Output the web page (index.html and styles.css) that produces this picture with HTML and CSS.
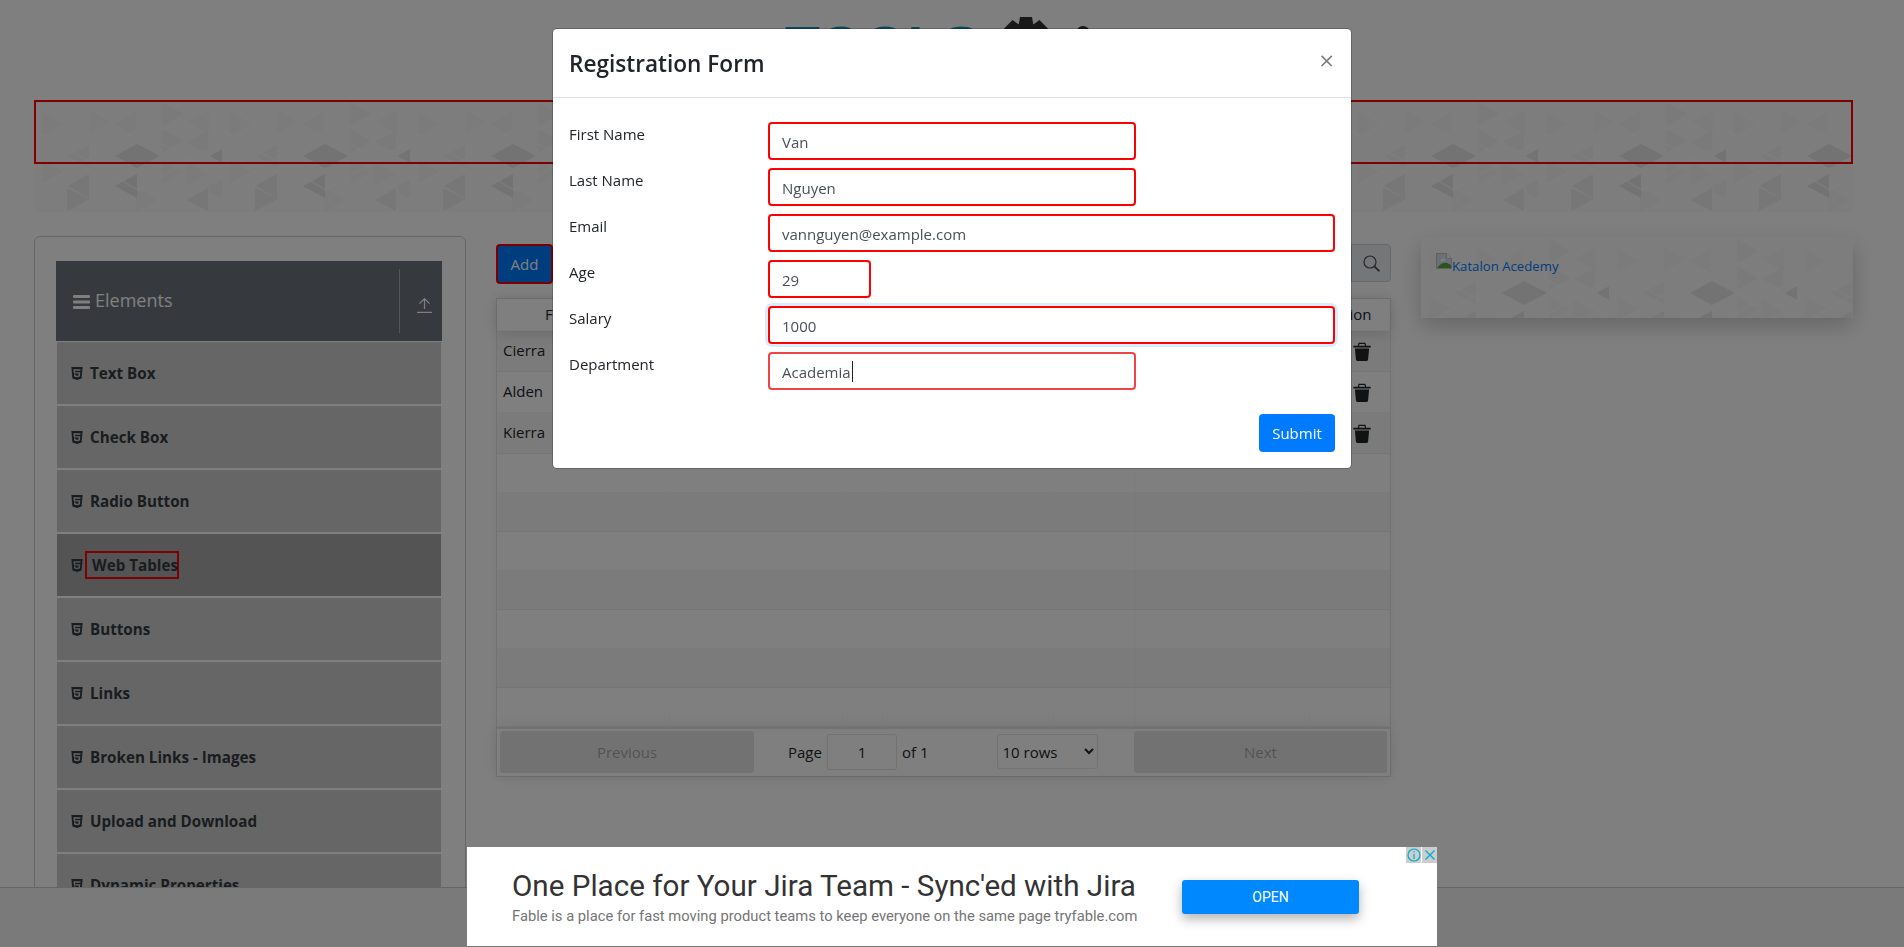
FILE: index.html
```html
<!DOCTYPE html>
<html>
<head>
    <title>ToolsQA - Web Tables</title>
    <link rel="stylesheet" href="styles.css">
</head>
<body>
    <svg class="svg-defs" width="0" height="0">
        <defs>
            <pattern id="triangles" width="188" height="112" patternUnits="userSpaceOnUse">
                <rect width="188" height="112" fill="#fafafa"/>
                <g fill="#f6f6f6">
                    <path d="M8 12l21 12-21 12zM55 10l21 12-21 12zM102 12l-21 12 21 12zM175 10l-21 12 21 12zM8 60l21 12-21 12zM128 60l21 12-21 12zM152 62l21 12-21 12zM102 88l21 12-21 12z"/>
                </g>
                <g fill="#f4f4f4">
                    <path d="M128 29l21 12-21 12zM153 42l21-11v22zM34 56l21-11v22zM128 2l21 12-21 12z"/>
                    <path d="M176 86l12-6v18l-12-6z"/>
                </g>
                <g fill="#eeeeee">
                    <path d="M33 88l23 11-23 12zM153 100l21-12v23zM34 86l21-12v24z"/>
                </g>
                <g fill="#e6e6e6">
                    <path d="M81 56l22-12v24zM103 44l23 12-23 12zM176 56l21-12v24z"/>
                    <path d="M81 86l22-12v24z"/>
                </g>
                <g stroke="#ffffff" stroke-width="2" fill="none" opacity="0.5">
                    <path d="M0 30l52 30 52-30 52 30 32-18M0 90l52-30 52 30 52-30 32 18"/>
                </g>
            </pattern>
        </defs>
    </svg>

    <div class="page">
        <header class="logo-row">
            <div class="logo">
                <span class="logo-text">TOOLS</span>
                <svg class="logo-gear" width="50" height="50" viewBox="0 0 50 50">
                    <circle cx="25" cy="25" r="19" fill="#333"/>
                    <g fill="#333">
                        <path d="M19 0h12l2 12H17z"/>
                        <path d="M19 0h12l2 12H17z" transform="rotate(45 25 25)"/>
                        <path d="M19 0h12l2 12H17z" transform="rotate(90 25 25)"/>
                        <path d="M19 0h12l2 12H17z" transform="rotate(135 25 25)"/>
                        <path d="M19 0h12l2 12H17z" transform="rotate(180 25 25)"/>
                        <path d="M19 0h12l2 12H17z" transform="rotate(225 25 25)"/>
                        <path d="M19 0h12l2 12H17z" transform="rotate(270 25 25)"/>
                        <path d="M19 0h12l2 12H17z" transform="rotate(315 25 25)"/>
                    </g>
                </svg>
                <span class="logo-head"></span>
            </div>
        </header>

        <div class="banner">
            <svg class="pattern-fill" width="100%" height="100%"><rect width="100%" height="100%" fill="url(#triangles)"/></svg>
            <div class="banner-mark"></div>
        </div>

        <div class="columns">
            <aside class="side-card">
                <div class="group-header">
                    <svg class="bars" width="17" height="14" viewBox="0 0 17 14"><path d="M1 0h15a1 1 0 0 1 1 1v1a1 1 0 0 1-1 1H1a1 1 0 0 1-1-1V1a1 1 0 0 1 1-1zM1 5.5h15a1 1 0 0 1 1 1v1a1 1 0 0 1-1 1H1a1 1 0 0 1-1-1v-1a1 1 0 0 1 1-1zM1 11h15a1 1 0 0 1 1 1v1a1 1 0 0 1-1 1H1a1 1 0 0 1-1-1v-1a1 1 0 0 1 1-1z" fill="#fff"/></svg>
                    <span class="group-title">Elements</span>
                    <div class="group-toggle">
                        <svg width="15" height="15" viewBox="0 0 15 15" fill="none" stroke="#fff" stroke-width="1.2"><path d="M7.5 11V.8M2.5 5.6l5-5 5 5M0 14.4h15"/></svg>
                    </div>
                </div>
                <ul class="menu">
                    <li class="menu-item"><svg class="html5" viewBox="0 0 384 512"><use href="#html5-shape"/></svg><span>Text Box</span></li>
                    <li class="menu-item"><svg class="html5" viewBox="0 0 384 512"><use href="#html5-shape"/></svg><span>Check Box</span></li>
                    <li class="menu-item"><svg class="html5" viewBox="0 0 384 512"><use href="#html5-shape"/></svg><span>Radio Button</span></li>
                    <li class="menu-item active"><svg class="html5" viewBox="0 0 384 512"><use href="#html5-shape"/></svg><span class="marked">Web Tables</span></li>
                    <li class="menu-item"><svg class="html5" viewBox="0 0 384 512"><use href="#html5-shape"/></svg><span>Buttons</span></li>
                    <li class="menu-item"><svg class="html5" viewBox="0 0 384 512"><use href="#html5-shape"/></svg><span>Links</span></li>
                    <li class="menu-item"><svg class="html5" viewBox="0 0 384 512"><use href="#html5-shape"/></svg><span>Broken Links - Images</span></li>
                    <li class="menu-item"><svg class="html5" viewBox="0 0 384 512"><use href="#html5-shape"/></svg><span>Upload and Download</span></li>
                    <li class="menu-item"><svg class="html5" viewBox="0 0 384 512"><use href="#html5-shape"/></svg><span>Dynamic Properties</span></li>
                </ul>
                <svg width="0" height="0" class="svg-defs"><defs><path id="html5-shape" fill="currentColor" d="M0 32l34.9 395.8L191.5 480l157.6-52.2L384 32H0zm308.2 127.9H124.4l4.1 49.4h175.6l-13.6 148.4-97.9 27v.3h-1.1l-98.7-27.3-6-75.8h47.7L138 320l53.5 14.5 53.7-14.5 6-62.2H84.3L71.5 112.2h241.1l-4.4 47.7z"/></defs></svg>
            </aside>

            <main class="table-col">
                <div class="table-tools">
                    <button class="add-btn">Add</button>
                    <div class="search-group">
                        <input class="search-input" type="text">
                        <span class="search-btn">
                            <svg width="17" height="17" viewBox="0 0 17 17" fill="none" stroke="#495057" stroke-width="1.2"><circle cx="7" cy="7" r="6"/><path d="M11.4 11.4l5 5" stroke-width="1.7"/></svg>
                        </span>
                    </div>
                </div>

                <div class="rt">
                    <div class="rt-row rt-head">
                        <div class="rt-cell">First Name</div><div class="rt-cell">Last Name</div><div class="rt-cell">Age</div><div class="rt-cell">Email</div><div class="rt-cell">Salary</div><div class="rt-cell">Department</div><div class="rt-cell">Action</div>
                    </div>
                    <div class="rt-row filled odd">
                        <div class="rt-cell">Cierra</div><div class="rt-cell">Vega</div><div class="rt-cell">39</div><div class="rt-cell">cierra@example.com</div><div class="rt-cell">10000</div><div class="rt-cell">Insurance</div>
                        <div class="rt-cell action"><svg class="trash" viewBox="0 0 18 19"><path d="M5.4 4.4l.6-3h6l.6 3" fill="none" stroke="currentColor" stroke-width="1.2"/><path d="M.3 3.8h17.4v1.7H.3zM1.9 6.6h14.2l-1 11q-.1 1.4-1.4 1.4H4.3q-1.3 0-1.4-1.4z" fill="currentColor"/></svg></div>
                    </div>
                    <div class="rt-row filled">
                        <div class="rt-cell">Alden</div><div class="rt-cell">Cantrell</div><div class="rt-cell">45</div><div class="rt-cell">alden@example.com</div><div class="rt-cell">12000</div><div class="rt-cell">Compliance</div>
                        <div class="rt-cell action"><svg class="trash" viewBox="0 0 18 19"><path d="M5.4 4.4l.6-3h6l.6 3" fill="none" stroke="currentColor" stroke-width="1.2"/><path d="M.3 3.8h17.4v1.7H.3zM1.9 6.6h14.2l-1 11q-.1 1.4-1.4 1.4H4.3q-1.3 0-1.4-1.4z" fill="currentColor"/></svg></div>
                    </div>
                    <div class="rt-row filled odd">
                        <div class="rt-cell">Kierra</div><div class="rt-cell">Gentry</div><div class="rt-cell">29</div><div class="rt-cell">kierra@example.com</div><div class="rt-cell">2000</div><div class="rt-cell">Legal</div>
                        <div class="rt-cell action"><svg class="trash" viewBox="0 0 18 19"><path d="M5.4 4.4l.6-3h6l.6 3" fill="none" stroke="currentColor" stroke-width="1.2"/><path d="M.3 3.8h17.4v1.7H.3zM1.9 6.6h14.2l-1 11q-.1 1.4-1.4 1.4H4.3q-1.3 0-1.4-1.4z" fill="currentColor"/></svg></div>
                    </div>
                    <div class="rt-row"><div class="rt-cell"></div><div class="rt-cell"></div><div class="rt-cell"></div><div class="rt-cell"></div><div class="rt-cell"></div><div class="rt-cell"></div><div class="rt-cell"></div></div>
                    <div class="rt-row odd"><div class="rt-cell"></div><div class="rt-cell"></div><div class="rt-cell"></div><div class="rt-cell"></div><div class="rt-cell"></div><div class="rt-cell"></div><div class="rt-cell"></div></div>
                    <div class="rt-row"><div class="rt-cell"></div><div class="rt-cell"></div><div class="rt-cell"></div><div class="rt-cell"></div><div class="rt-cell"></div><div class="rt-cell"></div><div class="rt-cell"></div></div>
                    <div class="rt-row odd"><div class="rt-cell"></div><div class="rt-cell"></div><div class="rt-cell"></div><div class="rt-cell"></div><div class="rt-cell"></div><div class="rt-cell"></div><div class="rt-cell"></div></div>
                    <div class="rt-row"><div class="rt-cell"></div><div class="rt-cell"></div><div class="rt-cell"></div><div class="rt-cell"></div><div class="rt-cell"></div><div class="rt-cell"></div><div class="rt-cell"></div></div>
                    <div class="rt-row odd"><div class="rt-cell"></div><div class="rt-cell"></div><div class="rt-cell"></div><div class="rt-cell"></div><div class="rt-cell"></div><div class="rt-cell"></div><div class="rt-cell"></div></div>
                    <div class="rt-row"><div class="rt-cell"></div><div class="rt-cell"></div><div class="rt-cell"></div><div class="rt-cell"></div><div class="rt-cell"></div><div class="rt-cell"></div><div class="rt-cell"></div></div>

                    <div class="pagination">
                        <button class="page-btn">Previous</button>
                        <div class="page-center">
                            <span>Page</span>
                            <input class="page-input" type="text" value="1">
                            <span>of 1</span>
                            <select class="page-size"><option>10 rows</option></select>
                        </div>
                        <button class="page-btn next">Next</button>
                    </div>
                </div>
            </main>

            <div class="promo-col">
                <div class="promo">
                    <svg class="pattern-fill" width="100%" height="100%"><rect width="100%" height="100%" fill="url(#triangles)"/></svg>
                    <a class="promo-link" href="#">
                        <svg width="16" height="16" viewBox="0 0 16 16"><path d="M.5.5h10l5 5v10H.5z" fill="#d8def0" stroke="#c0c0c0"/><path d="M10.5.5v5h5" fill="#fff" stroke="#c0c0c0"/><path d="M4 8l3-3 3 3z" fill="#fff"/><path d="M1 15c3-5 8-6 10-5l4 2v3z" fill="#5aa83a"/></svg>Katalon Acedemy</a>
                </div>
            </div>
        </div>
    </div>

    <footer class="site-footer"></footer>

    <div class="backdrop">
        <div class="modal">
            <div class="modal-header">
                <div class="modal-title">Registration Form</div>
                <button class="close-btn">×</button>
            </div>
            <form class="modal-body">
                <div class="form-row">
                    <label class="form-label">First Name</label>
                    <input class="form-input half" type="text" value="Van">
                </div>
                <div class="form-row">
                    <label class="form-label">Last Name</label>
                    <input class="form-input half" type="text" value="Nguyen">
                </div>
                <div class="form-row">
                    <label class="form-label">Email</label>
                    <input class="form-input" type="text" value="vannguyen@example.com">
                </div>
                <div class="form-row">
                    <label class="form-label">Age</label>
                    <input class="form-input small" type="text" value="29">
                </div>
                <div class="form-row">
                    <label class="form-label">Salary</label>
                    <input class="form-input glow" type="text" value="1000">
                </div>
                <div class="form-row">
                    <label class="form-label">Department</label>
                    <div class="input-wrap">
                        <input class="form-input half focused" type="text" value="Academia">
                        <span class="caret"></span>
                    </div>
                </div>
                <div class="form-actions">
                    <button class="submit-btn" type="button">Submit</button>
                </div>
            </form>
        </div>
    </div>

    <div class="ad">
        <div class="ad-marks">
            <span class="ad-mark"><svg width="14" height="14" viewBox="0 0 14 14" fill="none" stroke="#00aecd" stroke-width="1.2"><circle cx="7" cy="7" r="6"/><path d="M7 6v5M7 3.2v1.4"/></svg></span>
            <span class="ad-mark"><svg width="12" height="12" viewBox="0 0 12 12" fill="none" stroke="#00aecd" stroke-width="1.4"><path d="M1.5 1.5l9 9M10.5 1.5l-9 9"/></svg></span>
        </div>
        <div class="ad-copy">
            <div class="ad-title">One Place for Your Jira Team - Sync'ed with Jira</div>
            <div class="ad-text">Fable is a place for fast moving product teams to keep everyone on the same page tryfable.com</div>
        </div>
        <a class="ad-open" href="#">OPEN</a>
    </div>
</body>
</html>
```

FILE: styles.css
```css
html,
body {
    height: 100%;
    margin: 0;
    overflow: hidden;
}

body {
    background-color: #fff;
    color: #212529;
    font-family: "Open Sans", "Noto Sans", sans-serif;
    font-size: 15px;
    line-height: 24px;
}

.svg-defs {
    position: absolute;
}

.page {
    padding: 0 51px 0 34px;
}

/* logo, mostly behind the modal */
.logo-row {
    display: flex;
    justify-content: center;
    height: 100px;
    margin-left: -34px;
    margin-right: -51px;
}

.logo {
    display: flex;
    align-items: flex-start;
    width: 334px;
    padding-top: 17px;
    box-sizing: border-box;
}

.logo-text {
    width: 216px;
    margin-top: 0;
    color: #1a94bc;
    font-family: "Liberation Sans", sans-serif;
    font-size: 57px;
    font-weight: 700;
    line-height: 60px;
}

.logo-head {
    width: 14px;
    height: 14px;
    margin: 9px 0 0 25px;
    border-radius: 50%;
    background-color: #333;
}

.banner {
    position: relative;
    height: 112px;
}

.pattern-fill {
    display: block;
}

.banner-mark {
    position: absolute;
    top: 0;
    left: 0;
    right: 0;
    height: 60px;
    border: 2px solid #f00;
}

.columns {
    display: grid;
    grid-template-columns: 432px 1fr 432px;
    gap: 30px;
    margin-top: 24px;
}

/* left menu */
.side-card {
    padding: 24px 23px 0 21px;
    border: 1px solid #ccc;
    border-radius: 6px;
}

.group-header {
    display: flex;
    align-items: center;
    height: 80px;
    padding-left: 17px;
    background-color: #6c757d;
    color: #fff;
}

.bars {
    margin-top: 2px;
}

.group-title {
    margin-left: 5px;
    margin-top: -2px;
    font-size: 18px;
}

.group-toggle {
    display: flex;
    align-items: center;
    justify-content: flex-end;
    height: 64px;
    margin-left: auto;
    width: 43px;
    padding-right: 10px;
    padding-top: 8px;
    box-sizing: border-box;
    border-left: 1px solid rgba(255, 255, 255, 0.4);
}

.menu {
    margin: 0;
    padding: 0;
    list-style: none;
}

.menu-item {
    display: flex;
    align-items: center;
    height: 64px;
    padding-left: 14px;
    box-sizing: border-box;
    border: 1px solid #fff;
    background-color: #ccc;
    color: #343a40;
    font-size: 15.2px;
    font-weight: 700;
}

.menu-item.active {
    background-color: #a9a9a9;
}

.html5 {
    width: 12px;
    height: 15px;
    margin-right: 7px;
}

.marked {
    margin-left: -5px;
    padding-left: 5px;
    width: 85px;
    height: 24px;
    border: 2px solid #f00;
    white-space: nowrap;
}

/* table */
.table-col {
    padding-top: 8px;
    min-width: 0;
}

.table-tools {
    display: flex;
    align-items: flex-start;
    justify-content: space-between;
    margin-bottom: 14px;
}

.add-btn {
    width: 57px;
    height: 40px;
    border: 2px solid #f00;
    border-radius: 4px;
    background-color: #007bff;
    color: #fff;
    font: inherit;
}

.search-group {
    display: flex;
    width: 440px;
    height: 38px;
}

.search-input {
    flex: 1;
    border: 1px solid #ced4da;
    border-right: none;
    border-radius: 4px 0 0 4px;
}

.search-btn {
    display: flex;
    align-items: center;
    justify-content: center;
    width: 40px;
    padding-top: 1px;
    box-sizing: border-box;
    border: 1px solid #ced4da;
    border-radius: 0 4px 4px 0;
    background-color: #e9ecef;
}

.rt {
    border: 1px solid rgba(0, 0, 0, 0.1);
    box-shadow: 0 0 8px rgba(0, 0, 0, 0.05);
}

.rt-row {
    display: grid;
    grid-template-columns: 173px 173px 40px 171px 82px 174px 1fr;
    height: 39px;
    box-sizing: border-box;
    border-bottom: 1px solid rgba(0, 0, 0, 0.04);
}

.rt-row.filled {
    height: 41px;
}

.rt-row.odd {
    background-color: rgba(0, 0, 0, 0.03);
}

.rt-head {
    position: relative;
    height: 32px;
    box-shadow: 0 2px 15px rgba(0, 0, 0, 0.15);
    text-align: center;
    line-height: 30px;
}

.rt-cell {
    padding: 7px 6px;
    box-sizing: border-box;
    border-right: 1px solid rgba(0, 0, 0, 0.02);
    overflow: hidden;
    white-space: nowrap;
}

.rt-head .rt-cell {
    padding: 0 5px;
}

.rt-cell.action {
    border-right: none;
    padding: 0 0 0 43px;
}

.trash {
    display: block;
    width: 18px;
    height: 19px;
    margin-top: 11px;
    color: #212529;
}

.pagination {
    display: flex;
    align-items: center;
    height: 49px;
    padding: 0 3px 2px;
    box-sizing: border-box;
    border-top: 2px solid rgba(0, 0, 0, 0.1);
    box-shadow: 0 0 15px rgba(0, 0, 0, 0.1);
}

.page-btn {
    width: 254px;
    height: 42px;
    border: none;
    border-radius: 3px;
    background-color: rgba(0, 0, 0, 0.1);
    color: rgba(0, 0, 0, 0.3);
    font: inherit;
}

.page-btn.next {
    width: 253px;
}

.page-center {
    display: flex;
    flex: 1;
    align-items: center;
    gap: 5px;
    padding-left: 34px;
}

.page-input {
    width: 70px;
    height: 36px;
    padding: 0;
    box-sizing: border-box;
    border: 1px solid rgba(0, 0, 0, 0.1);
    border-radius: 3px;
    color: #212529;
    font: inherit;
    text-align: center;
}

.page-size {
    width: 101px;
    height: 35px;
    margin-left: 64px;
    border: 1px solid rgba(0, 0, 0, 0.1);
    border-radius: 3px;
    background-color: #fff;
    color: #212529;
    font: inherit;
}

/* right box */
.promo-col {
    padding-top: 1px;
}

.promo {
    position: relative;
    height: 81px;
    box-shadow: 0 8px 20px rgba(0, 0, 0, 0.2);
}

.promo-link {
    position: absolute;
    top: 16px;
    left: 15px;
    display: flex;
    align-items: flex-start;
    color: #007bff;
    font-size: 13.2px;
    line-height: 26px;
    text-decoration: none;
}

.site-footer {
    position: fixed;
    left: 0;
    right: 0;
    bottom: 0;
    height: 60px;
    border-top: 1px solid #ccc;
    box-sizing: border-box;
    background-color: #f5f5f5;
}

/* modal */
.backdrop {
    position: fixed;
    inset: 0;
    display: flex;
    justify-content: center;
    align-items: flex-start;
    background-color: rgba(0, 0, 0, 0.5);
}

.modal {
    width: 800px;
    margin-top: 28px;
    box-sizing: border-box;
    border: 1px solid rgba(0, 0, 0, 0.2);
    border-radius: 5px;
    background-color: #fff;
    background-clip: padding-box;
}

.modal-header {
    display: flex;
    align-items: flex-start;
    justify-content: space-between;
    height: 69px;
    padding: 16px 16px 0;
    box-sizing: border-box;
    border-bottom: 1px solid #dee2e6;
}

.modal-title {
    font-size: 22.6px;
    font-weight: 600;
    line-height: 38px;
}

.close-btn {
    padding: 0 1px 0 0;
    border: none;
    background: none;
    color: #000;
    font-family: inherit;
    font-size: 26px;
    font-weight: 400;
    line-height: 30px;
    opacity: 0.5;
}

.modal-body {
    padding: 24px 16px 16px;
}

.form-row {
    display: flex;
    margin-bottom: 8px;
}

.form-label {
    width: 199px;
    flex: none;
}

.form-input {
    width: 567px;
    height: 38px;
    padding: 1px 12px 0;
    box-sizing: border-box;
    border: 2px solid #f00;
    border-radius: 4px;
    background-color: #fff;
    color: #495057;
    font: inherit;
}

.form-input.half {
    width: 368px;
}

.form-input.small {
    width: 103px;
}

.form-input.glow {
    box-shadow: 0 0 0 3px rgba(0, 123, 255, 0.15);
}

.form-input.focused {
    border-color: #ee4444;
}

.input-wrap {
    position: relative;
    display: flex;
}

.caret {
    position: absolute;
    left: 84px;
    top: 9px;
    width: 1px;
    height: 21px;
    background-color: #222;
}

.form-actions {
    display: flex;
    justify-content: flex-end;
    padding-top: 16px;
}

.submit-btn {
    width: 76px;
    height: 38px;
    border: none;
    border-radius: 4px;
    background-color: #007bff;
    color: #fff;
    font: inherit;
}

/* ad strip */
.ad {
    position: fixed;
    left: 467px;
    bottom: 1px;
    display: flex;
    width: 970px;
    height: 99px;
    background-color: #fff;
    font-family: Roboto, sans-serif;
}

.ad-marks {
    position: absolute;
    top: 0;
    right: 0;
    display: flex;
    gap: 1px;
}

.ad-mark {
    display: flex;
    align-items: center;
    justify-content: center;
    width: 15px;
    height: 16px;
    background-color: #cdcdcd;
}

.ad-copy {
    padding: 17px 0 0 45px;
    width: 715px;
    box-sizing: border-box;
}

.ad-title {
    color: #333;
    font-size: 29.6px;
    line-height: 44px;
    white-space: nowrap;
}

.ad-text {
    margin-top: -2px;
    color: #757575;
    font-size: 14.75px;
    line-height: 20px;
    white-space: nowrap;
}

.ad-open {
    align-self: flex-start;
    width: 177px;
    height: 34px;
    margin-top: 33px;
    border-radius: 3px;
    background-color: #0088ff;
    box-shadow: 0 5px 12px rgba(0, 0, 0, 0.3);
    color: #fff;
    font-size: 14px;
    font-weight: 400;
    line-height: 34px;
    text-align: center;
    text-decoration: none;
}
```
